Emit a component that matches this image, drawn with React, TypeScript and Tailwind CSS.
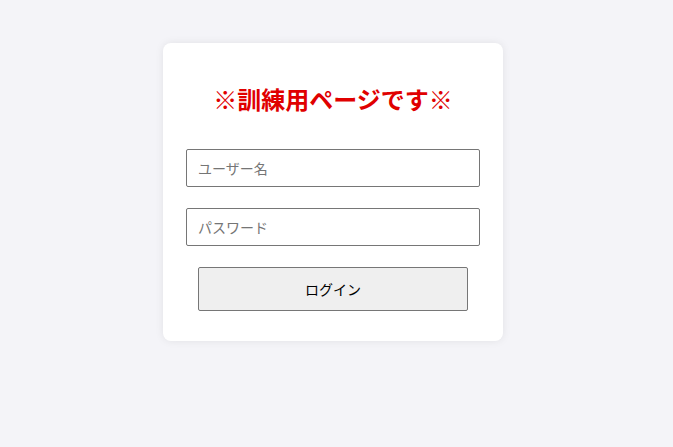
export default function App() {
  return (
    <div
      className="min-h-[447px] bg-[#f4f4f8] pt-[43px] pr-[7px] flex justify-center items-start"
      style={{ fontFamily: '"Noto Sans CJK JP", "Noto Sans", sans-serif' }}
    >
      <div className="w-[340px] h-[298px] bg-white rounded-lg shadow-[0_0_8px_rgba(0,0,0,0.08)] px-[23px] pt-[39px]">
        <h2 className="text-center text-[24px] leading-[33px] font-bold text-[#e00000]">
          ※訓練用ページです※
        </h2>
        <form className="mt-[34px] flex flex-col" onSubmit={(e) => e.preventDefault()}>
          <input
            type="text"
            placeholder="ユーザー名"
            className="h-[38px] w-full border border-[#767676] rounded-[2px] px-[11px] text-[14px] text-black placeholder:text-[#757575] outline-none"
          />
          <input
            type="password"
            placeholder="パスワード"
            className="mt-[21px] h-[38px] w-full border border-[#767676] rounded-[2px] px-[11px] text-[14px] text-black placeholder:text-[#757575] outline-none"
          />
          <button
            type="submit"
            className="mt-[21px] mx-auto h-[44px] w-[270px] border border-[#767676] rounded-[2px] bg-[#efefef] text-[14px] text-black"
          >
            ログイン
          </button>
        </form>
      </div>
    </div>
  );
}
